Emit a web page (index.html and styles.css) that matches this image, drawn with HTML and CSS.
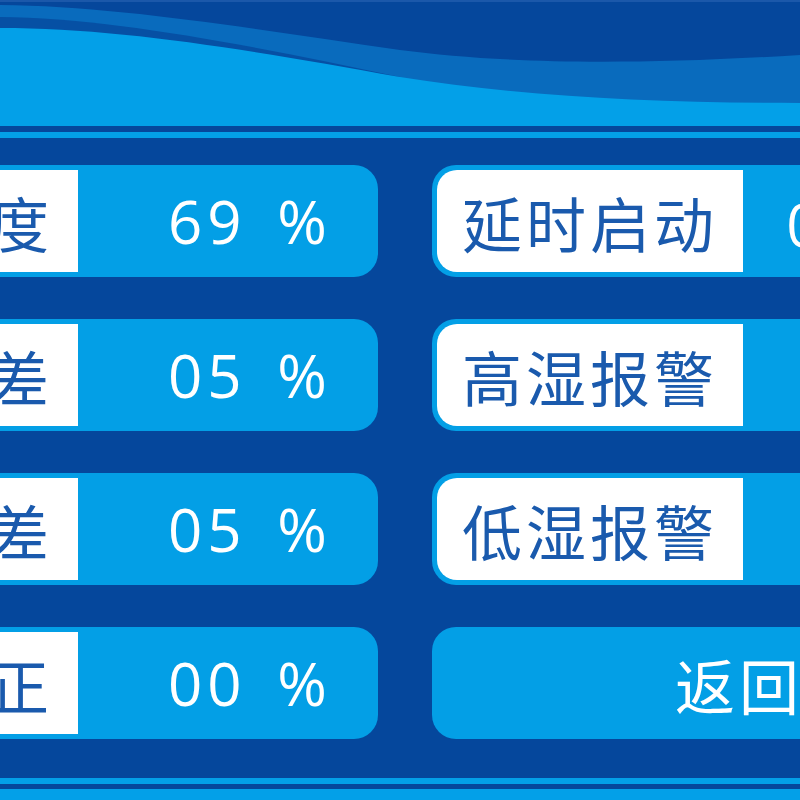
FILE: index.html
```html
<!DOCTYPE html>
<html lang="zh-CN">
<head>
    <meta charset="UTF-8">
    <meta name="viewport" content="width=device-width, initial-scale=1.0">
    <title>湿度参数设置</title>
    <link rel="stylesheet" href="styles.css">
</head>
<body>
    <div class="header">
        <svg class="wave" width="800" height="138" viewBox="0 0 800 138">
            <rect x="0" y="0" width="800" height="138" fill="#05479c"/>
            <rect x="0" y="0" width="800" height="2" fill="#1b58aa"/>
            <path d="M0,5 C120,6 260,30 400,50 C500,63 620,66 800,55 V126 H0 Z" fill="#096bbd"/>
            <path d="M0,17 C110,18 250,45 400,77 V126 H0 Z" fill="#0650a4"/>
            <path d="M0,28 C120,28 250,50 400,77 C520,96 650,103 800,103 V126 H0 Z" fill="#03a0e8"/>
            <rect x="0" y="132" width="800" height="6" fill="#03a0e8"/>
        </svg>
    </div>

    <div class="main">
        <div class="panel">
            <div class="card">
                <div class="label">设定湿度</div>
                <div class="value left-value">69 %</div>
            </div>
            <div class="card">
                <div class="label">延时启动</div>
                <div class="value right-value">010 秒</div>
            </div>

            <div class="card">
                <div class="label">上限回差</div>
                <div class="value left-value">05 %</div>
            </div>
            <div class="card">
                <div class="label">高湿报警</div>
                <div class="value right-value">ON</div>
            </div>

            <div class="card">
                <div class="label">下限回差</div>
                <div class="value left-value">05 %</div>
            </div>
            <div class="card">
                <div class="label">低湿报警</div>
                <div class="value right-value">ON</div>
            </div>

            <div class="card">
                <div class="label">湿度校正</div>
                <div class="value left-value">00 %</div>
            </div>
            <button class="card back-button">返回</button>
        </div>
    </div>

    <div class="footer">
        <div class="stripe light"></div>
        <div class="stripe dark"></div>
        <div class="stripe bottom"></div>
    </div>
</body>
</html>
```

FILE: styles.css
```css
body {
    margin: 0;
    width: 800px;
    height: 800px;
    overflow: hidden;
    background-color: #05479c;
    font-family: "Noto Sans CJK SC", sans-serif;
}
.header {
    height: 138px;
}
.wave {
    display: block;
}
.main {
    height: 640px;
    padding-top: 27px;
    box-sizing: border-box;
}
.panel {
    display: grid;
    grid-template-columns: 611px 611px;
    column-gap: 54px;
    row-gap: 42px;
    margin-left: -233px;
}
.card {
    display: flex;
    height: 112px;
    padding: 5px 0 5px 5px;
    box-sizing: border-box;
    background-color: #039fe6;
    border-radius: 24px;
}
.label {
    width: 306px;
    background-color: #ffffff;
    border-radius: 20px 0 0 20px;
    color: #1a5aad;
    font-size: 60px;
    letter-spacing: 4px;
    display: flex;
    align-items: center;
    justify-content: center;
    white-space: nowrap;
}
.value {
    flex: 1;
    display: flex;
    align-items: center;
    color: #ffffff;
    font-family: "Open Sans", "Noto Sans CJK SC", sans-serif;
    font-size: 60px;
    letter-spacing: 5px;
    word-spacing: 10px;
    white-space: nowrap;
}
.left-value {
    padding-left: 90px;
}
.right-value {
    justify-content: center;
}
.back-button {
    border: none;
    padding: 0 0 0 3px;
    justify-content: center;
    align-items: center;
    color: #ffffff;
    font-family: "Noto Sans CJK SC", sans-serif;
    font-size: 60px;
    letter-spacing: 4px;
    cursor: pointer;
}
.stripe {
    width: 800px;
}
.light {
    height: 6px;
    background-color: #03a0e8;
}
.dark {
    height: 5px;
    background-color: #05479c;
}
.bottom {
    height: 11px;
    background-color: #03a0e8;
}
```
